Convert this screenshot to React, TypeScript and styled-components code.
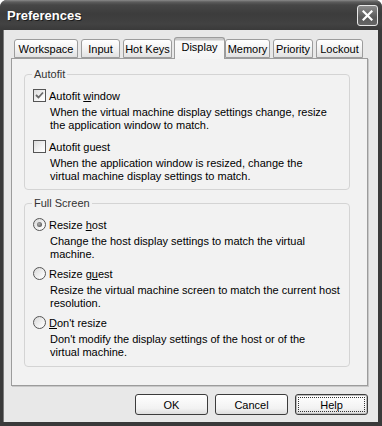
import React, { useState } from 'react';
import styled, { createGlobalStyle } from 'styled-components';

const GlobalStyle = createGlobalStyle`
  html, body {
    margin: 0;
    padding: 0;
    background: #ffffff;
  }
  body {
    font-family: 'Liberation Sans', Arial, sans-serif;
    font-size: 11px;
    color: #000;
  }
`;

const Window = styled.div`
  width: 382px;
  height: 426px;
  box-sizing: border-box;
  display: flex;
  flex-direction: column;
  background: #3a3a3a;
  border-radius: 7px 7px 0 0;
  overflow: hidden;
`;

const TitleBar = styled.div`
  height: 30px;
  flex-shrink: 0;
  display: flex;
  align-items: center;
  justify-content: space-between;
  padding: 0 4px 0 7px;
  box-sizing: border-box;
  background: linear-gradient(
    to bottom,
    #8a8a8a 0px,
    #5c5c5c 2px,
    #464646 5px,
    #3c3c3c 14px,
    #424242 24px,
    #3a3a3a 30px
  );
`;

const Title = styled.span`
  color: #fff;
  font-weight: bold;
  font-size: 13px;
  text-shadow: 1px 1px 0 #1c1c1c;
  margin-top: 1px;
`;

const CloseButton = styled.div`
  width: 21px;
  height: 21px;
  box-sizing: border-box;
  border: 1px solid #e8e8e8;
  border-radius: 3px;
  background: linear-gradient(to bottom, #8c8c8c, #5a5a5a 60%, #666);
  display: flex;
  align-items: center;
  justify-content: center;
  margin-top: 1px;
`;

const Body = styled.div`
  flex: 1;
  margin: 0 4px 4px 3px;
  background: #e8e8e8;
  border-left: 1px solid #7a7a7a;
  padding: 7px 10px 0 7px;
  display: flex;
  flex-direction: column;
`;

const TabRow = styled.div`
  display: flex;
  align-items: flex-end;
  padding-left: 3px;
  height: 21px;
  position: relative;
  z-index: 1;
`;

const Tab = styled.div<{ $active?: boolean; $width: number; $gap: number }>`
  box-sizing: border-box;
  width: ${(p) => p.$width}px;
  height: ${(p) => (p.$active ? '22px' : '19px')};
  margin-right: ${(p) => p.$gap}px;
  margin-left: ${(p) => (p.$active ? '-1px' : '0')};
  margin-bottom: ${(p) => (p.$active ? '-1px' : '0')};
  padding-bottom: ${(p) => (p.$active ? '3px' : '0')};
  border: 1px solid #9c9c9c;
  border-bottom: ${(p) => (p.$active ? 'none' : '1px solid #9c9c9c')};
  border-radius: 3px 3px 0 0;
  background: ${(p) =>
    p.$active
      ? 'linear-gradient(to bottom, #c8c8c8 0, #c8c8c8 2px, #fafafa 3px, #f4f4f4)'
      : 'linear-gradient(to bottom, #ffffff, #f0f0f0 60%, #e2e2e2)'};
  display: flex;
  align-items: center;
  justify-content: center;
  white-space: nowrap;
  cursor: default;
`;

const Panel = styled.div`
  height: 328px;
  box-sizing: border-box;
  border: 1px solid #9c9c9c;
  background: #f2f2f2;
  box-shadow: 1px 1px 0 #c8c8c8;
  padding: 9px 17px 0 12px;
  display: flex;
  flex-direction: column;
  gap: 7px;
`;

const Group = styled.fieldset<{ $height: number }>`
  margin: 0;
  height: ${(p) => p.$height}px;
  box-sizing: border-box;
  border: 1px solid #d4d4d4;
  border-radius: 4px;
  padding: 8px 8px 0 8px;
`;

const Legend = styled.legend`
  padding: 0 2px;
  margin-left: -1px;
  color: #333;
`;

const Option = styled.div<{ $gap: number }>`
  margin-bottom: ${(p) => p.$gap}px;
`;

const OptionRow = styled.label`
  display: flex;
  align-items: center;
  gap: 3px;
  height: 15px;
  cursor: default;
`;

const CheckBox = styled.span`
  width: 13px;
  height: 13px;
  box-sizing: border-box;
  border: 1px solid #555;
  background: linear-gradient(135deg, #dcdcdc, #f8f8f8 70%, #ffffff);
  display: flex;
  align-items: center;
  justify-content: center;
  flex-shrink: 0;
`;

const Radio = styled.span`
  width: 13px;
  height: 13px;
  box-sizing: border-box;
  border: 1px solid #555;
  border-radius: 50%;
  background: linear-gradient(135deg, #d8d8d8, #f6f6f6 70%, #ffffff);
  display: flex;
  align-items: center;
  justify-content: center;
  flex-shrink: 0;
`;

const Dot = styled.span`
  width: 5px;
  height: 5px;
  border-radius: 50%;
  background: radial-gradient(circle at 40% 40%, #b0b0b0, #555 80%);
`;

const Description = styled.div`
  margin: 3px 0 0 17px;
  line-height: 13px;
  color: #000;
`;

const Key = styled.span`
  text-decoration: underline;
`;

const ButtonRow = styled.div`
  display: flex;
  justify-content: flex-end;
  gap: 7px;
  margin-top: 8px;
`;

const Button = styled.button<{ $focused?: boolean }>`
  width: 73px;
  height: 21px;
  box-sizing: border-box;
  font-family: inherit;
  font-size: 11px;
  color: #000;
  border: 1px solid #3c3c3c;
  border-radius: 3px;
  background: linear-gradient(to bottom, #ffffff, #f2f2f2 70%, #dedede);
  padding: 0;
  position: relative;
  cursor: default;
  box-shadow: ${(p) => (p.$focused ? 'inset 0 0 0 1px #bdbdbd' : 'none')};

  &::after {
    content: '';
    display: ${(p) => (p.$focused ? 'block' : 'none')};
    position: absolute;
    inset: 2px;
    border: 1px dotted #333;
  }
`;

type Item = {
  kind: 'check' | 'radio';
  label: React.ReactNode;
  desc: React.ReactNode;
};

const tabs = [
  { label: 'Workspace', width: 64, gap: 3 },
  { label: 'Input', width: 39, gap: 3 },
  { label: 'Hot Keys', width: 49, gap: 3 },
  { label: 'Display', width: 51, gap: 0 },
  { label: 'Memory', width: 45, gap: 3 },
  { label: 'Priority', width: 40, gap: 3 },
  { label: 'Lockout', width: 47, gap: 0 },
];

const autofitItems: Item[] = [
  {
    kind: 'check',
    label: (
      <span>
        Autofit <Key>w</Key>indow
      </span>
    ),
    desc: (
      <>
        When the virtual machine display settings change, resize
        <br />
        the application window to match.
      </>
    ),
  },
  {
    kind: 'check',
    label: (
      <span>
        Autofit <Key>g</Key>uest
      </span>
    ),
    desc: (
      <>
        When the application window is resized, change the
        <br />
        virtual machine display settings to match.
      </>
    ),
  },
];

const screenItems: Item[] = [
  {
    kind: 'radio',
    label: (
      <span>
        Resize <Key>h</Key>ost
      </span>
    ),
    desc: (
      <>
        Change the host display settings to match the virtual
        <br />
        machine.
      </>
    ),
  },
  {
    kind: 'radio',
    label: (
      <span>
        Resize g<Key>u</Key>est
      </span>
    ),
    desc: (
      <>
        Resize the virtual machine screen to match the current host
        <br />
        resolution.
      </>
    ),
  },
  {
    kind: 'radio',
    label: (
      <span>
        <Key>D</Key>on't resize
      </span>
    ),
    desc: (
      <>
        Don't modify the display settings of the host or of the
        <br />
        virtual machine.
      </>
    ),
  },
];

const CheckMark = () => (
  <svg width="9" height="9" viewBox="0 0 9 9">
    <path d="M1 4 L3.5 6.5 L8 1.5" fill="none" stroke="#6a6a6a" strokeWidth="1.8" />
  </svg>
);

const CloseIcon = () => (
  <svg width="11" height="11" viewBox="0 0 11 11">
    <path d="M1.5 1.5 L9.5 9.5 M9.5 1.5 L1.5 9.5" stroke="#fff" strokeWidth="2.2" strokeLinecap="square" />
  </svg>
);

const App = () => {
  const [checked, setChecked] = useState([true, false]);
  const [mode, setMode] = useState(0);

  return (
    <>
      <GlobalStyle />
      <Window>
        <TitleBar>
          <Title>Preferences</Title>
          <CloseButton>
            <CloseIcon />
          </CloseButton>
        </TitleBar>
        <Body>
          <TabRow>
            {tabs.map((t) => (
              <Tab key={t.label} $active={t.label === 'Display'} $width={t.width} $gap={t.gap}>
                {t.label}
              </Tab>
            ))}
          </TabRow>
          <Panel>
            <Group $height={122}>
              <Legend>Autofit</Legend>
              {autofitItems.map((item, i) => (
                <Option key={i} $gap={7}>
                  <OptionRow
                    onClick={() => setChecked((prev) => prev.map((v, j) => (j === i ? !v : v)))}
                  >
                    <CheckBox>{checked[i] && <CheckMark />}</CheckBox>
                    {item.label}
                  </OptionRow>
                  <Description>{item.desc}</Description>
                </Option>
              ))}
            </Group>
            <Group $height={170}>
              <Legend>Full Screen</Legend>
              {screenItems.map((item, i) => (
                <Option key={i} $gap={5}>
                  <OptionRow onClick={() => setMode(i)}>
                    <Radio>{mode === i && <Dot />}</Radio>
                    {item.label}
                  </OptionRow>
                  <Description>{item.desc}</Description>
                </Option>
              ))}
            </Group>
          </Panel>
          <ButtonRow>
            <Button>OK</Button>
            <Button>Cancel</Button>
            <Button $focused>Help</Button>
          </ButtonRow>
        </Body>
      </Window>
    </>
  );
};

export default App;
